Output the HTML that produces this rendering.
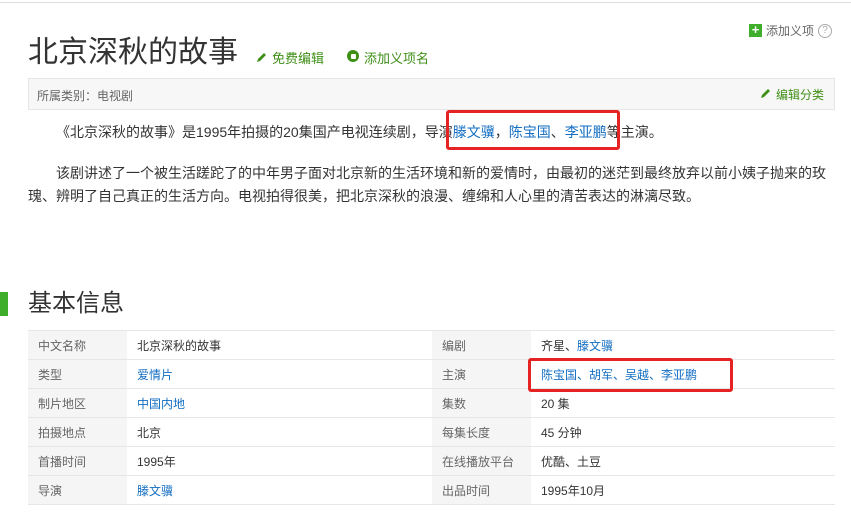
<!DOCTYPE html>
<html><head><meta charset="utf-8"><style>
*{margin:0;padding:0;box-sizing:border-box}
body{width:851px;height:529px;background:#fff;font-family:"Liberation Sans","Noto Sans CJK SC",sans-serif;color:#333;position:relative;overflow:hidden;font-size:13px}
.a{position:absolute;white-space:nowrap}
.g{color:#3f8f17}
.b{color:#136ec2}
table{position:absolute;left:28px;top:330px;border-collapse:collapse;width:807px}
td{height:29px;border-top:1px solid #e6e6e6;border-bottom:1px solid #e6e6e6;font-size:12px;padding:0 10px;vertical-align:middle}
td.l{background:#f5f5f5;color:#666}
</style></head><body>
<div class="a" style="left:0;top:2px;width:851px;height:1px;background:#ddd"></div>
<div class="a" style="left:749px;top:24px;width:13px;height:13px;background:#3fae2a;color:#fff;font-size:13px;line-height:12px;text-align:center;font-weight:bold">+</div>
<div class="a" style="left:766px;top:22px;color:#666;font-size:12px;line-height:18px">添加义项</div>
<div class="a" style="left:818px;top:24px;width:14px;height:14px;border:1px solid #aaa;border-radius:50%;color:#aaa;font-size:10px;line-height:12px;text-align:center">?</div>
<div class="a" style="left:28px;top:35px;font-size:30px;color:#333;line-height:36px">北京深秋的故事</div>
<svg class="a" style="left:256px;top:51px" width="12" height="12" viewBox="0 0 12 12"><path d="M1 11 L2 8 L8 2 L10 4 L4 10 Z" fill="#3f8f17"/></svg>
<div class="a g" style="left:272px;top:48px;font-size:13px">免费编辑</div>
<div class="a" style="left:347px;top:50px;width:12px;height:12px;border-radius:50%;background:#3f8f17"></div>
<div class="a" style="left:351px;top:54px;width:5px;height:5px;background:#fff;border-radius:1px"></div>
<div class="a g" style="left:364px;top:48px;font-size:13px">添加义项名</div>
<div class="a" style="left:28px;top:78px;width:807px;height:32px;background:#f7f7f7;border:1px solid #e6e6e6"></div>
<div class="a" style="left:37px;top:87px;font-size:12px;color:#666">所属类别：电视剧</div>
<svg class="a" style="left:760px;top:87px" width="12" height="12" viewBox="0 0 12 12"><path d="M1 11 L2 8 L8 2 L10 4 L4 10 Z" fill="#3f8f17"/></svg>
<div class="a g" style="left:776px;top:86px;font-size:12px">编辑分类</div>
<div class="a" style="left:56px;top:122px;font-size:14px;line-height:20px">《北京深秋的故事》是1995年拍摄的20集国产电视连续剧，导演<span class="b">滕文骥</span>，<span class="b">陈宝国</span>、<span class="b">李亚鹏</span>等主演。</div>
<div class="a" style="left:446px;top:110px;width:174px;height:40px;border:3px solid #e52323;border-radius:3px"></div>
<div class="a" style="left:56px;top:162px;font-size:14px;line-height:22px">该剧讲述了一个被生活蹉跎了的中年男子面对北京新的生活环境和新的爱情时，由最初的迷茫到最终放弃以前小姨子抛来的玫</div>
<div class="a" style="left:28px;top:185px;font-size:14px;line-height:22px">瑰、辨明了自己真正的生活方向。电视拍得很美，把北京深秋的浪漫、缠绵和人心里的清苦表达的淋漓尽致。</div>
<div class="a" style="left:0;top:292px;width:8px;height:24px;background:#3fae2a"></div>
<div class="a" style="left:28px;top:288px;font-size:24px;line-height:32px;color:#333">基本信息</div>
<table>
<tr><td class="l" style="width:99px">中文名称</td><td style="width:305px">北京深秋的故事</td><td class="l" style="width:99px">编剧</td><td>齐星、<span class="b">滕文骥</span></td></tr>
<tr><td class="l">类型</td><td class="b">爱情片</td><td class="l">主演</td><td class="b">陈宝国、胡军、吴越、李亚鹏</td></tr>
<tr><td class="l">制片地区</td><td class="b">中国内地</td><td class="l">集数</td><td>20 集</td></tr>
<tr><td class="l">拍摄地点</td><td>北京</td><td class="l">每集长度</td><td>45 分钟</td></tr>
<tr><td class="l">首播时间</td><td>1995年</td><td class="l">在线播放平台</td><td>优酷、土豆</td></tr>
<tr><td class="l">导演</td><td class="b">滕文骥</td><td class="l">出品时间</td><td>1995年10月</td></tr>
</table>
<div class="a" style="left:528px;top:358px;width:205px;height:34px;border:3px solid #e52323;border-radius:3px"></div>
</body></html>
